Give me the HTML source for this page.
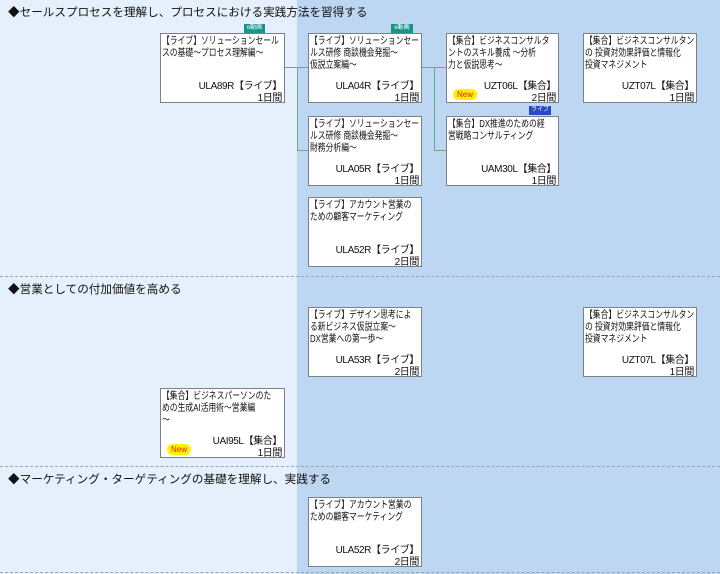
<!DOCTYPE html>
<html><head><meta charset="utf-8"><style>
*{margin:0;padding:0;box-sizing:border-box}
body{width:720px;height:574px;position:relative;overflow:hidden;background:#e5f0fc;font-family:"Liberation Sans","Noto Sans CJK JP",sans-serif;color:#111;font-size:10px}
.right{position:absolute;left:297px;top:0;width:423px;height:574px;background:#bdd7f2}
.sep{position:absolute;left:0;width:720px;border-top:1px dashed #9aa4b0}
.t{position:absolute;left:8px;font-size:11.6px;line-height:13px;white-space:nowrap}
.b{position:absolute;width:114px;height:70px;background:#fff;border:1px solid #7c8088;padding:2px 1px;line-height:12px;font-size:10px;white-space:nowrap;overflow:hidden}
.b .x{display:inline-block;transform:scaleX(.78);transform-origin:0 0}
.b .c{position:absolute;right:2px;top:47px;text-align:right;line-height:12px;font-size:10px;letter-spacing:-0.4px}
.new{position:absolute;left:6px;top:55px;width:24px;height:11px;border-radius:6px;background:#fff200;color:#e02020;font-size:8px;line-height:11px;text-align:center;letter-spacing:0}
.bd{position:absolute;height:9px;font-size:6px;line-height:9px;color:#fff;text-align:center}
.g{position:absolute;background:#5fae86}
</style></head><body>
<div class="right"></div>
<div class="sep" style="top:276px"></div>
<div class="sep" style="top:466px"></div>
<div class="sep" style="top:572px"></div>
<div class="t" style="top:6px">◆セールスプロセスを理解し、プロセスにおける実践方法を習得する</div>
<div class="t" style="top:283px">◆営業としての付加価値を高める</div>
<div class="t" style="top:473px">◆マーケティング・ターゲティングの基礎を理解し、実践する</div>

<div class="g" style="left:285px;top:67px;width:24px;height:1px"></div>
<div class="g" style="left:297px;top:67px;width:1px;height:84px"></div>
<div class="g" style="left:297px;top:150px;width:12px;height:1px"></div>
<div class="g" style="left:422px;top:67px;width:25px;height:1px"></div>
<div class="g" style="left:434px;top:67px;width:1px;height:84px"></div>
<div class="g" style="left:434px;top:150px;width:13px;height:1px"></div>

<div class="bd" style="left:244px;top:24px;width:21px;background:#16968a">e動画</div>
<div class="bd" style="left:391px;top:24px;width:22px;background:#16968a">e動画</div>
<div class="bd" style="left:529px;top:106px;width:22px;background:#2a48c8">ライブ</div>

<div class="b" style="left:160px;top:33px;width:125px"><span class="x">【ライブ】ソリューションセール<br>スの基礎～プロセス理解編～</span><div class="c">ULA89R【ライブ】<br>1日間</div></div>
<div class="b" style="left:308px;top:33px"><span class="x">【ライブ】ソリューションセー<br>ルス研修 商談機会発掘～<br>仮説立案編～</span><div class="c">ULA04R【ライブ】<br>1日間</div></div>
<div class="b" style="left:446px;top:33px;width:113px"><span class="x">【集合】ビジネスコンサルタ<br>ントのスキル養成 ～分析<br>力と仮説思考～</span><div class="c">UZT06L【集合】<br>2日間</div><div class="new">New</div></div>
<div class="b" style="left:583px;top:33px"><span class="x">【集合】ビジネスコンサルタント<br>の 投資対効果評価と情報化<br>投資マネジメント</span><div class="c">UZT07L【集合】<br>1日間</div></div>
<div class="b" style="left:308px;top:116px"><span class="x">【ライブ】ソリューションセー<br>ルス研修 商談機会発掘～<br>財務分析編～</span><div class="c">ULA05R【ライブ】<br>1日間</div></div>
<div class="b" style="left:446px;top:116px;width:113px"><span class="x">【集合】DX推進のための経<br>営戦略コンサルティング</span><div class="c">UAM30L【集合】<br>1日間</div></div>
<div class="b" style="left:308px;top:197px"><span class="x">【ライブ】アカウント営業の<br>ための顧客マーケティング</span><div class="c">ULA52R【ライブ】<br>2日間</div></div>

<div class="b" style="left:308px;top:307px"><span class="x">【ライブ】デザイン思考によ<br>る新ビジネス仮説立案～<br>DX営業への第一歩～</span><div class="c">ULA53R【ライブ】<br>2日間</div></div>
<div class="b" style="left:583px;top:307px"><span class="x">【集合】ビジネスコンサルタント<br>の 投資対効果評価と情報化<br>投資マネジメント</span><div class="c">UZT07L【集合】<br>1日間</div></div>
<div class="b" style="left:160px;top:388px;width:125px"><span class="x">【集合】ビジネスパーソンのた<br>めの生成AI活用術～営業編<br>～</span><div class="c">UAI95L【集合】<br>1日間</div><div class="new">New</div></div>

<div class="b" style="left:308px;top:497px"><span class="x">【ライブ】アカウント営業の<br>ための顧客マーケティング</span><div class="c">ULA52R【ライブ】<br>2日間</div></div>
</body></html>
